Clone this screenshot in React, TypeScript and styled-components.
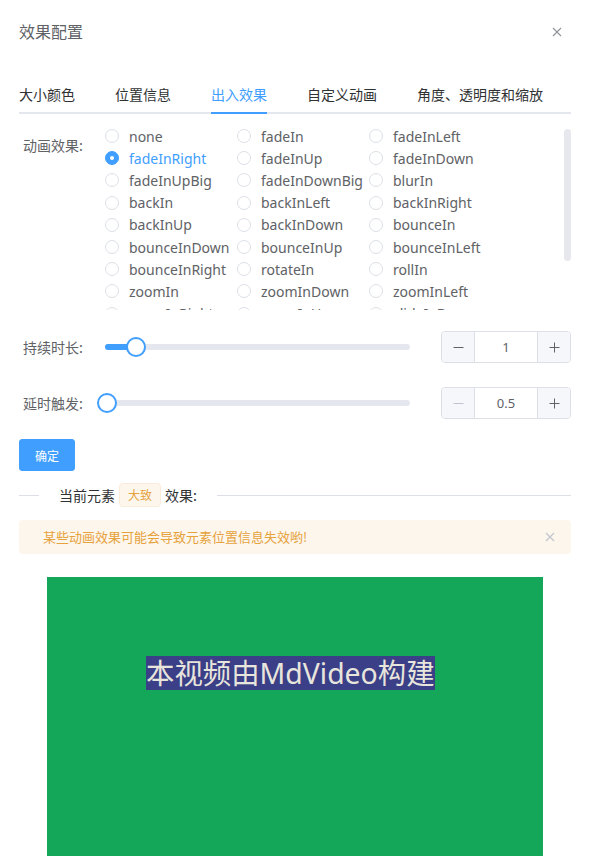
import React from "react";
import styled, { createGlobalStyle } from "styled-components";

const GlobalStyle = createGlobalStyle`
  html, body {
    margin: 0;
    padding: 0;
    background: #ffffff;
    font-family: "Noto Sans", "Noto Sans CJK SC", sans-serif;
    -webkit-font-smoothing: antialiased;
  }
`;

const Dialog = styled.div`
  width: 590px;
  background: #fff;
`;

const Header = styled.div`
  display: flex;
  align-items: center;
  justify-content: space-between;
  padding: 20px 19px 10px 19px;
`;

const Title = styled.span`
  font-size: 16px;
  line-height: 24px;
  color: #606266;
`;

const CloseButton = styled.button`
  width: 16px;
  height: 16px;
  padding: 0;
  margin-right: 6px;
  border: none;
  background: transparent;
  display: flex;
  align-items: center;
  justify-content: center;
  cursor: pointer;
`;

const Body = styled.div`
  padding: 20px 19px 0 19px;
`;

const TabNav = styled.div`
  display: flex;
  height: 40px;
  box-shadow: inset 0 -2px 0 #e4e7ed;
  margin-bottom: 11px;
`;

const Tab = styled.div<{ $active?: boolean }>`
  position: relative;
  padding: 0 20px;
  height: 40px;
  line-height: 40px;
  font-size: 14px;
  color: ${(p) => (p.$active ? "#409eff" : "#303133")};
  font-family: "Noto Sans CJK SC", sans-serif;
  white-space: nowrap;
  &:first-child { padding-left: 0; }
  &:last-child { padding-right: 0; }
  &::after {
    content: "";
    display: ${(p) => (p.$active ? "block" : "none")};
    position: absolute;
    left: 20px;
    right: 20px;
    bottom: 0;
    height: 2px;
    background: #409eff;
  }
`;

const FormItem = styled.div<{ $mt?: number }>`
  display: flex;
  align-items: flex-start;
  margin-top: ${(p) => p.$mt ?? 0}px;
`;

const Label = styled.div<{ $lh?: number }>`
  width: 82px;
  padding-left: 4px;
  flex: none;
  font-size: 14px;
  line-height: ${(p) => p.$lh ?? 40}px;
  color: #606266;
  font-family: "Noto Sans CJK SC", sans-serif;
  white-space: nowrap;
`;

const RadioScroller = styled.div`
  position: relative;
  flex: 1;
  height: 185px;
  overflow: hidden;
`;

const ScrollThumb = styled.div`
  position: absolute;
  right: 0;
  top: 4px;
  width: 7px;
  height: 132px;
  border-radius: 4px;
  background: #e7e8ee;
`;

const RadioGrid = styled.div`
  display: grid;
  grid-template-columns: repeat(3, 132px);
  grid-auto-rows: 22.2px;
`;

const RadioItem = styled.label`
  display: flex;
  align-items: center;
  white-space: nowrap;
  cursor: pointer;
`;

const RadioCircle = styled.span<{ $checked?: boolean }>`
  flex: none;
  box-sizing: border-box;
  width: 14px;
  height: 14px;
  border-radius: 50%;
  border: 1px solid ${(p) => (p.$checked ? "#409eff" : "#dcdfe6")};
  background: ${(p) => (p.$checked ? "#409eff" : "#fff")};
  display: flex;
  align-items: center;
  justify-content: center;
  &::after {
    content: "";
    width: 4px;
    height: 4px;
    border-radius: 50%;
    background: #fff;
    display: ${(p) => (p.$checked ? "block" : "none")};
  }
`;

const RadioText = styled.span<{ $checked?: boolean }>`
  margin-left: 10px;
  font-size: 14px;
  color: ${(p) => (p.$checked ? "#409eff" : "#606266")};
`;

const SliderRow = styled.div`
  display: flex;
  align-items: center;
  flex: 1;
  height: 38px;
`;

const Runway = styled.div`
  position: relative;
  width: 305px;
  height: 6px;
  border-radius: 3px;
  background: #e4e7ed;
`;

const SliderBar = styled.div`
  position: absolute;
  left: 0;
  top: 0;
  height: 6px;
  border-radius: 3px;
  background: #409eff;
`;

const SliderThumb = styled.div`
  position: absolute;
  top: 50%;
  box-sizing: border-box;
  width: 20px;
  height: 20px;
  border-radius: 50%;
  border: 2px solid #409eff;
  background: #fff;
  transform: translate(-50%, -50%);
`;

const InputNumber = styled.div`
  margin-left: auto;
  display: flex;
  box-sizing: border-box;
  width: 130px;
  height: 32px;
  border: 1px solid #dcdfe6;
  border-radius: 4px;
  overflow: hidden;
`;

const StepButton = styled.span<{ $disabled?: boolean; $side: "left" | "right" }>`
  flex: none;
  width: 32px;
  height: 30px;
  display: flex;
  align-items: center;
  justify-content: center;
  background: #f5f7fa;
  color: ${(p) => (p.$disabled ? "#c0c4cc" : "#606266")};
  ${(p) => (p.$side === "left" ? "border-right: 1px solid #dcdfe6;" : "border-left: 1px solid #dcdfe6;")}
`;

const NumberValue = styled.span`
  flex: 1;
  text-align: center;
  line-height: 30px;
  font-size: 13px;
  color: #606266;
`;

const PrimaryButton = styled.button`
  margin-top: 17px;
  box-sizing: border-box;
  width: 56px;
  height: 32px;
  padding: 0;
  border: 1px solid #409eff;
  border-radius: 3px;
  background: #409eff;
  color: #fff;
  font-size: 12px;
  font-family: "Noto Sans CJK SC", sans-serif;
  cursor: pointer;
`;

const Divider = styled.div`
  display: flex;
  align-items: center;
  margin: 12px 0 13px 0;
  height: 24px;
`;

const DividerLine = styled.div<{ $grow?: boolean }>`
  height: 1px;
  background: #dcdfe6;
  ${(p) => (p.$grow ? "flex: 1;" : "width: 20px; flex: none;")}
`;

const DividerText = styled.div`
  display: flex;
  align-items: center;
  gap: 4px;
  padding: 0 20px;
  font-size: 14px;
  color: #303133;
  font-family: "Noto Sans CJK SC", sans-serif;
  white-space: nowrap;
`;

const Tag = styled.span`
  box-sizing: border-box;
  height: 24px;
  line-height: 22px;
  padding: 0 8px;
  font-size: 12px;
  color: #e6a23c;
  background: #fdf6ec;
  border: 1px solid #faecd8;
  border-radius: 4px;
`;

const Alert = styled.div`
  display: flex;
  align-items: center;
  padding: 8px 16px;
  background: #fdf6ec;
  border-radius: 4px;
`;

const AlertText = styled.span`
  flex: 1;
  padding: 0 8px;
  font-size: 13px;
  line-height: 18px;
  color: #e6a23c;
  font-family: "Noto Sans CJK SC", sans-serif;
`;

const AlertClose = styled.span`
  display: flex;
  align-items: center;
`;

const VideoStage = styled.div`
  position: relative;
  margin: 23px auto 0 auto;
  width: 496px;
  height: 279px;
  background: #14a659;
`;

const Caption = styled.span`
  position: absolute;
  left: 99px;
  top: 79px;
  background: #3a3f87;
  color: #e8e5dc;
  font-size: 28.4px;
  line-height: 34px;
  font-family: "Noto Sans", "Noto Sans CJK SC", sans-serif;
  white-space: nowrap;
`;

const XIcon = ({ size, color }: { size: number; color: string }) => (
  <svg width={size} height={size} viewBox="0 0 10 10">
    <path d="M1 1 L9 9 M9 1 L1 9" stroke={color} strokeWidth="1.1" />
  </svg>
);

const MinusIcon = () => (
  <svg width="11" height="11" viewBox="0 0 11 11">
    <path d="M0.5 5.5 H10.5" stroke="currentColor" strokeWidth="1" />
  </svg>
);

const PlusIcon = () => (
  <svg width="11" height="11" viewBox="0 0 11 11">
    <path d="M0.5 5.5 H10.5 M5.5 0.5 V10.5" stroke="currentColor" strokeWidth="1" />
  </svg>
);

const tabs = ["大小颜色", "位置信息", "出入效果", "自定义动画", "角度、透明度和缩放"];

const effects = [
  "none", "fadeIn", "fadeInLeft",
  "fadeInRight", "fadeInUp", "fadeInDown",
  "fadeInUpBig", "fadeInDownBig", "blurIn",
  "backIn", "backInLeft", "backInRight",
  "backInUp", "backInDown", "bounceIn",
  "bounceInDown", "bounceInUp", "bounceInLeft",
  "bounceInRight", "rotateIn", "rollIn",
  "zoomIn", "zoomInDown", "zoomInLeft",
  "zoomInRight", "zoomInUp", "slideInDown",
  "slideInLeft", "slideInRight", "slideInUp",
  "lightSpeedIn", "flipInX", "flipInY",
  "jackInTheBox", "rotateInDownLeft", "rotateInUpRight",
];

const sliders = [
  { label: "持续时长:", value: "1", percent: 10.2, minDisabled: false },
  { label: "延时触发:", value: "0.5", percent: 0.7, minDisabled: true },
];

export default function App() {
  const selected = "fadeInRight";
  return (
    <>
      <GlobalStyle />
      <Dialog>
        <Header>
          <Title>效果配置</Title>
          <CloseButton aria-label="关闭">
            <XIcon size={10} color="#909399" />
          </CloseButton>
        </Header>
        <Body>
          <TabNav>
            {tabs.map((t) => (
              <Tab key={t} $active={t === "出入效果"}>{t}</Tab>
            ))}
          </TabNav>

          <FormItem>
            <Label>动画效果:</Label>
            <RadioScroller>
              <RadioGrid>
                {effects.map((e) => (
                  <RadioItem key={e}>
                    <RadioCircle $checked={e === selected} />
                    <RadioText $checked={e === selected}>{e}</RadioText>
                  </RadioItem>
                ))}
              </RadioGrid>
              <ScrollThumb />
            </RadioScroller>
          </FormItem>

          {sliders.map((s, i) => (
            <FormItem key={s.label} $mt={i === 0 ? 18 : 18}>
              <Label $lh={38}>{s.label}</Label>
              <SliderRow>
                <Runway>
                  <SliderBar style={{ width: `${s.percent}%` }} />
                  <SliderThumb style={{ left: `${s.percent}%` }} />
                </Runway>
                <InputNumber>
                  <StepButton $side="left" $disabled={s.minDisabled}>
                    <MinusIcon />
                  </StepButton>
                  <NumberValue>{s.value}</NumberValue>
                  <StepButton $side="right">
                    <PlusIcon />
                  </StepButton>
                </InputNumber>
              </SliderRow>
            </FormItem>
          ))}

          <PrimaryButton>确定</PrimaryButton>

          <Divider>
            <DividerLine />
            <DividerText>
              当前元素 <Tag>大致</Tag> 效果:
            </DividerText>
            <DividerLine $grow />
          </Divider>

          <Alert>
            <AlertText>某些动画效果可能会导致元素位置信息失效哟!</AlertText>
            <AlertClose>
              <XIcon size={10} color="#c0c4cc" />
            </AlertClose>
          </Alert>

          <VideoStage>
            <Caption>本视频由MdVideo构建</Caption>
          </VideoStage>
        </Body>
      </Dialog>
    </>
  );
}
